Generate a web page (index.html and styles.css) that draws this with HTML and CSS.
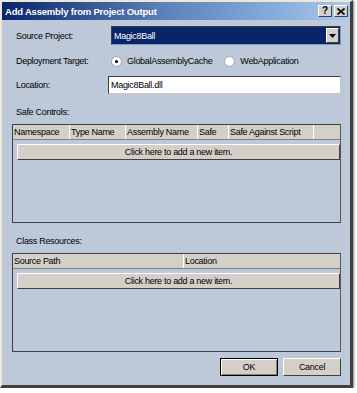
FILE: index.html
```html
<!DOCTYPE html>
<html lang="en-us">
<head>
<meta charset="utf-8">
<title>Add Assembly from Project Output</title>
<link rel="stylesheet" href="styles.css">
</head>
<body>

<div class="dialog">
    <div class="titleBar">
        <span class="titleText">Add Assembly from Project Output</span>
        <span class="titleButtons">
            <span class="capButton">?</span>
            <span class="capButton closeButton">
                <svg width="8" height="7" viewBox="0 0 8 7"><path d="M0.5 0.5 L7.5 6.5 M7.5 0.5 L0.5 6.5" stroke="#000" stroke-width="1.6"/></svg>
            </span>
        </span>
    </div>

    <div class="dialogBody">
        <div class="formRow sourceRow">
            <label class="fieldLabel">Source Project:</label>
            <div class="comboBox">
                <span class="comboValue">Magic8Ball</span>
                <span class="comboArrow">
                    <svg width="7" height="4" viewBox="0 0 7 4"><path d="M0 0 H7 L3.5 4 Z" fill="#000"/></svg>
                </span>
            </div>
        </div>

        <div class="formRow targetRow">
            <label class="fieldLabel">Deployment Target:</label>
            <span class="radioOption first">
                <span class="radioDot checked"></span>
                <span>GlobalAssemblyCache</span>
            </span>
            <span class="radioOption">
                <span class="radioDot"></span>
                <span>WebApplication</span>
            </span>
        </div>

        <div class="formRow locationRow">
            <label class="fieldLabel">Location:</label>
            <div class="textBox">Magic8Ball.dll</div>
        </div>

        <div class="sectionLabel">Safe Controls:</div>
        <div class="gridBox">
            <div class="gridHeader">
                <span class="col" style="width: 57px">Namespace</span>
                <span class="col" style="width: 56px">Type Name</span>
                <span class="col" style="width: 72px">Assembly Name</span>
                <span class="col" style="width: 31px">Safe</span>
                <span class="col" style="width: 85px">Safe Against Script</span>
                <span class="col last"></span>
            </div>
            <div class="newItemRow">Click here to add a new item.</div>
        </div>

        <div class="sectionLabel">Class Resources:</div>
        <div class="gridBox">
            <div class="gridHeader">
                <span class="col" style="width: 171px">Source Path</span>
                <span class="col last">Location</span>
            </div>
            <div class="newItemRow">Click here to add a new item.</div>
        </div>

        <div class="buttonRow">
            <button class="pushButton defaultButton">OK</button>
            <button class="pushButton">Cancel</button>
        </div>
    </div>
</div>

</body>
</html>
```

FILE: styles.css
```css
body {
    margin: 0;
    background-color: #ffffff;
    font-family: "Liberation Sans", Arial, sans-serif;
    font-size: 9px;
    letter-spacing: -0.3px;
    color: #000;
}
.dialog {
    box-sizing: border-box;
    width: 353px;
    height: 388px;
    background-color: #bdc9d9;
    border-top: 2px solid #ece9d8;
    border-left: 2px solid #ece9d8;
    border-right: 3px solid #404040;
    border-bottom: 3px solid #404040;
    box-shadow: 1px 1px 2px rgba(0, 0, 0, 0.5);
    display: flex;
    flex-direction: column;
}
.titleBar {
    height: 18px;
    display: flex;
    align-items: center;
    justify-content: space-between;
    padding: 0 2px 0 3px;
    background: linear-gradient(to right, #0a246a 0%, #5a7eb8 45%, #a6caf0 100%);
}
.titleText {
    color: #fff;
    font-weight: bold;
    font-size: 9.5px;
    letter-spacing: -0.2px;
}
.titleButtons {
    display: flex;
    gap: 2px;
}
.capButton {
    box-sizing: border-box;
    width: 14px;
    height: 12px;
    background-color: #d4d0c8;
    border-top: 1px solid #fff;
    border-left: 1px solid #fff;
    border-right: 1px solid #404040;
    border-bottom: 1px solid #404040;
    font-weight: bold;
    font-size: 10px;
    line-height: 10px;
    letter-spacing: 0;
    text-align: center;
    display: flex;
    align-items: center;
    justify-content: center;
}
.dialogBody {
    flex: 1;
    padding: 6px 9px 0 10px;
    display: flex;
    flex-direction: column;
}
.formRow {
    display: flex;
    align-items: center;
    white-space: nowrap;
}
.fieldLabel {
    padding-left: 4px;
}
.sourceRow {
    height: 19px;
}
.sourceRow .fieldLabel {
    width: 95px;
}
.comboBox {
    flex: 1;
    box-sizing: border-box;
    height: 19px;
    display: flex;
    align-items: center;
    background-color: #0a246a;
    border: 1px solid #7f9db9;
    border-top-color: #404040;
    border-left-color: #404040;
    padding: 0 1px 0 1px;
}
.comboValue {
    flex: 1;
    color: #fff;
    padding-left: 1px;
}
.comboArrow {
    box-sizing: border-box;
    width: 13px;
    height: 15px;
    background-color: #d4d0c8;
    border-top: 1px solid #fff;
    border-left: 1px solid #fff;
    border-right: 1px solid #404040;
    border-bottom: 1px solid #404040;
    display: flex;
    align-items: center;
    justify-content: center;
}
.targetRow {
    height: 16px;
    margin-top: 8px;
}
.targetRow .fieldLabel {
    width: 95px;
}
.radioOption {
    display: flex;
    align-items: center;
    gap: 5px;
}
.radioOption.first {
    margin-right: 12px;
}
.radioDot {
    box-sizing: border-box;
    width: 11px;
    height: 11px;
    border-radius: 50%;
    background-color: #fff;
    border: 1px solid #9aa2ac;
    position: relative;
}
.radioDot.checked::after {
    content: "";
    position: absolute;
    left: 3px;
    top: 3px;
    width: 3px;
    height: 3px;
    border-radius: 50%;
    background-color: #000;
}
.locationRow {
    height: 18px;
    margin-top: 7px;
}
.locationRow .fieldLabel {
    width: 92px;
}
.textBox {
    flex: 1;
    box-sizing: border-box;
    height: 18px;
    background-color: #fff;
    border: 1px solid #c8c8c8;
    border-top-color: #404040;
    border-left-color: #404040;
    padding: 1px 2px;
    line-height: 14px;
}
.sectionLabel {
    padding-left: 4px;
    height: 13px;
    line-height: 13px;
    margin-top: 12px;
    margin-bottom: 5px;
}
.gridBox {
    box-sizing: border-box;
    height: 99px;
    border: 1px solid #404040;
    border-right-color: #5a5a5a;
    background-color: #bdc9d9;
}
.gridHeader {
    height: 14px;
    display: flex;
    background-color: #d4d0c8;
    border-bottom: 1px solid #808080;
}
.col {
    box-sizing: border-box;
    padding-left: 1px;
    line-height: 14px;
    white-space: nowrap;
    overflow: hidden;
    border-right: 1px solid #fff;
    box-shadow: inset -2px 0 0 #d4d0c8;
}
.col.last {
    flex: 1;
    border-right: none;
}
.newItemRow {
    box-sizing: border-box;
    height: 16px;
    margin: 4px 0 0 4px;
    background-color: #d4d0c8;
    border-top: 1px solid #fff;
    border-left: 1px solid #fff;
    border-right: 1px solid #404040;
    border-bottom: 1px solid #404040;
    text-align: center;
    line-height: 14px;
}
.buttonRow {
    display: flex;
    justify-content: flex-end;
    gap: 5px;
    margin-top: 6px;
}
.pushButton {
    box-sizing: border-box;
    width: 58px;
    height: 18px;
    background-color: #d4d0c8;
    font-family: "Liberation Sans", Arial, sans-serif;
    font-size: 9px;
    letter-spacing: -0.3px;
    color: #000;
    border-top: 1px solid #fff;
    border-left: 1px solid #fff;
    border-right: 1px solid #404040;
    border-bottom: 1px solid #404040;
    padding: 0;
}
.defaultButton {
    border: 1px solid #000;
    box-shadow: inset 1px 1px 0 #fff, inset -1px -1px 0 #808080;
}
```
